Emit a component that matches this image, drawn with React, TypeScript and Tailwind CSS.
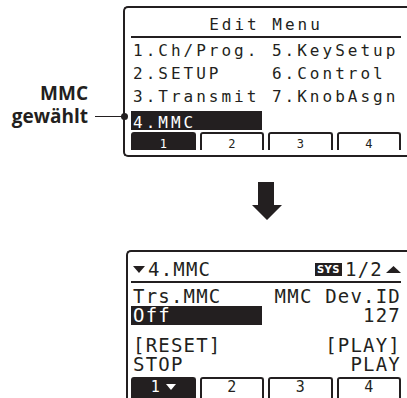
import React, { FC } from 'react'
import clsx from 'clsx'

type TriProps = { up?: boolean; className?: string }

const Tri: FC<TriProps> = ({ up = false, className }) => (
  <svg viewBox="0 0 12 7" className={className} preserveAspectRatio="none">
    <polygon points={up ? '0,7 12,7 6,0' : '0,0 12,0 6,7'} fill="currentColor" />
  </svg>
)

type TabProps = {
  n: string
  active?: boolean
  caret?: boolean
  big?: boolean
}

const Tab: FC<TabProps> = ({ n, active = false, caret = false, big = false }) => (
  <div
    className={clsx(
      'flex items-start justify-center gap-[6px] border-2 border-b-0 border-[#231f20] rounded-t-[3px]',
      active ? 'bg-[#231f20] text-white' : 'bg-white text-[#231f20]',
      big ? 'pt-[1px] text-[15px] leading-[15px]' : 'pt-[4px] text-[12px] leading-[12px]'
    )}
  >
    <span>{n}</span>
    {caret && <Tri className="mt-[4px] w-[10px] h-[6px]" />}
  </div>
)

const App: FC = () => {
  return (
    <div className="relative w-[407px] h-[398px] overflow-hidden bg-white text-[#231f20]">
      {/* top: edit menu */}
      <div className="flex pt-[6px]">
        <div className="relative w-[123px] shrink-0">
          <div className="mt-[76px] pr-[35px] text-right font-['Open_Sans',sans-serif] font-bold text-[19px] leading-[22.6px]">
            <div>MMC</div>
            <div>gewählt</div>
          </div>
          <div className="absolute left-[95px] top-[110px] w-[29px] h-px bg-[#231f20]" />
          <div className="absolute left-[121px] top-[107px] w-[7px] h-[7px] rounded-full bg-[#231f20] z-10" />
        </div>

        <div className="w-[300px] shrink-0 border-2 border-r-0 border-[#231f20] rounded-l-[5px] pl-[6px] font-['DejaVu_Sans_Mono',monospace] text-[16px] leading-[23px] tracking-[3px]">
          <div className="w-[270px]">
            <div className="pt-[5px] text-center border-b-2 border-[#231f20]">Edit Menu</div>
            <div className="pt-[1px] pl-[2px] whitespace-pre">
              <div>1.Ch/Prog. 5.KeySetup</div>
              <div>2.SETUP    6.Control</div>
              <div>3.Transmit 7.KnobAsgn</div>
            </div>
            <div className="mt-[3px] h-[19px] w-[131px] pl-[2px] bg-[#231f20] text-white">4.MMC</div>
            <div className="mt-[2px] grid grid-cols-4 gap-[4px] h-[17px] tracking-normal">
              <Tab n="1" active />
              <Tab n="2" />
              <Tab n="3" />
              <Tab n="4" />
            </div>
            <div className="h-[6px]" />
          </div>
        </div>
      </div>

      {/* arrow */}
      <div className="mt-[25px] ml-[252px] w-[30px] h-[38px]">
        <svg viewBox="0 0 30 38" className="w-[30px] h-[38px]">
          <polygon points="6,0 22,0 22,23 30,23 15,38 0,23 6,23" fill="#231f20" />
        </svg>
      </div>

      {/* bottom: MMC page */}
      <div className="mt-[30px] ml-[126px] w-[300px] border-2 border-r-0 border-b-0 border-[#231f20] rounded-tl-[5px] pl-[3px] font-['DejaVu_Sans_Mono',monospace] text-[19px] tracking-[1.2px]">
        <div className="w-[270px]">
          <div className="flex items-center justify-between pt-[7px] pb-[2px] leading-[20px] border-b-2 border-[#231f20]">
            <div className="flex items-center pl-[2px]">
              <Tri className="w-[12px] h-[7px] mr-[3px]" />
              <span>4.MMC</span>
            </div>
            <div className="flex items-center">
              <span className="h-[13px] px-[2px] bg-[#231f20] text-white font-['DejaVu_Sans',sans-serif] font-bold text-[10px] leading-[13px] tracking-[0.5px]">SYS</span>
              <span className="ml-[3px]">1/2</span>
              <Tri up className="ml-[3px] w-[15px] h-[7px]" />
            </div>
          </div>

          <div className="mt-[3px] flex justify-between pl-[2px] leading-[20px]">
            <span>Trs.MMC</span>
            <span>MMC Dev.ID</span>
          </div>
          <div className="flex justify-between h-[19px] leading-[19px]">
            <span className="w-[131px] pl-[2px] bg-[#231f20] text-white">Off</span>
            <span>127</span>
          </div>

          <div className="mt-[11px] flex justify-between pl-[2px] leading-[19px]">
            <span>[RESET]</span>
            <span>[PLAY]</span>
          </div>
          <div className="flex justify-between pl-[2px] leading-[19px]">
            <span>STOP</span>
            <span>PLAY</span>
          </div>

          <div className="mt-[3px] grid grid-cols-4 gap-[4px] h-[24px] tracking-normal">
            <Tab n="1" active caret big />
            <Tab n="2" big />
            <Tab n="3" big />
            <Tab n="4" big />
          </div>
        </div>
      </div>
    </div>
  )
}

export default App
